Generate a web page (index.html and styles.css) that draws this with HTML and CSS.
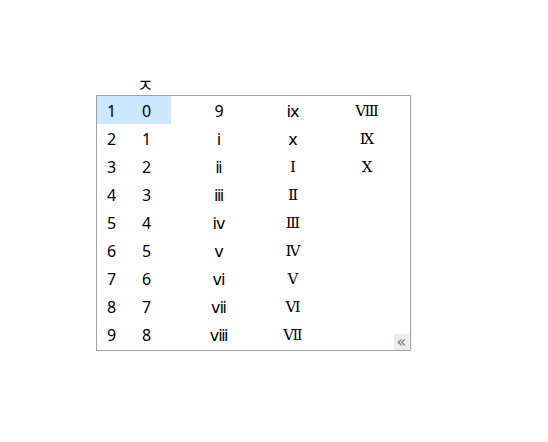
FILE: index.html
```html
<!DOCTYPE html>
<html>
<head>
  <title>Candidate Window</title>
  <link rel="stylesheet" href="styles.css">
</head>
<body>
  <div class="ime">
    <div class="composing">ㅈ</div>
    <div class="candidates">
      <div class="cand first selected"><span class="num">1</span><span class="text">0</span></div>
      <div class="cand first"><span class="num">2</span><span class="text">1</span></div>
      <div class="cand first"><span class="num">3</span><span class="text">2</span></div>
      <div class="cand first"><span class="num">4</span><span class="text">3</span></div>
      <div class="cand first"><span class="num">5</span><span class="text">4</span></div>
      <div class="cand first"><span class="num">6</span><span class="text">5</span></div>
      <div class="cand first"><span class="num">7</span><span class="text">6</span></div>
      <div class="cand first"><span class="num">8</span><span class="text">7</span></div>
      <div class="cand first"><span class="num">9</span><span class="text">8</span></div>

      <div class="cand">9</div>
      <div class="cand">ⅰ</div>
      <div class="cand">ⅱ</div>
      <div class="cand">ⅲ</div>
      <div class="cand">ⅳ</div>
      <div class="cand">ⅴ</div>
      <div class="cand">ⅵ</div>
      <div class="cand">ⅶ</div>
      <div class="cand">ⅷ</div>

      <div class="cand">ⅸ</div>
      <div class="cand">ⅹ</div>
      <div class="cand upper">Ⅰ</div>
      <div class="cand upper">Ⅱ</div>
      <div class="cand upper">Ⅲ</div>
      <div class="cand upper">Ⅳ</div>
      <div class="cand upper">Ⅴ</div>
      <div class="cand upper">Ⅵ</div>
      <div class="cand upper">Ⅶ</div>

      <div class="cand upper">Ⅷ</div>
      <div class="cand upper">Ⅸ</div>
      <div class="cand upper">Ⅹ</div>

      <button class="expand">«</button>
    </div>
  </div>
</body>
</html>
```

FILE: styles.css
```css
body {
  margin: 0;
  padding: 74px 0 0 96px;
  background: white;
  font-family: "Noto Sans", "DejaVu Sans", "Noto Sans CJK KR", sans-serif;
  color: #000;
}
.ime {
  width: 315px;
}
.composing {
  font-family: "Noto Sans CJK KR", sans-serif;
  font-size: 18px;
  line-height: 21px;
  margin-left: 41px;
}
.candidates {
  position: relative;
  box-sizing: border-box;
  height: 256px;
  border: 1px solid #a0a0a0;
  display: grid;
  grid-template-columns: 85px 74px 74px 74px;
  grid-template-rows: repeat(9, 28px);
  grid-auto-flow: column;
  font-size: 16px;
}
.cand {
  display: flex;
  align-items: center;
  justify-content: center;
  padding-top: 2px;
  box-sizing: border-box;
}
.cand.first {
  justify-content: flex-start;
  width: 74px;
}
.cand.selected {
  background: #cce8ff;
}
.cand.upper {
  font-family: "DejaVu Serif", "DejaVu Sans", sans-serif;
  font-size: 15px;
}
.num {
  width: 45px;
  padding-left: 10px;
  box-sizing: border-box;
}
.expand {
  position: absolute;
  right: 1px;
  bottom: 0;
  width: 15px;
  height: 16px;
  padding: 0;
  border: none;
  background: #ececec;
  color: #7a7a7a;
  font-family: "DejaVu Sans", sans-serif;
  font-size: 16px;
  line-height: 14px;
}
```
